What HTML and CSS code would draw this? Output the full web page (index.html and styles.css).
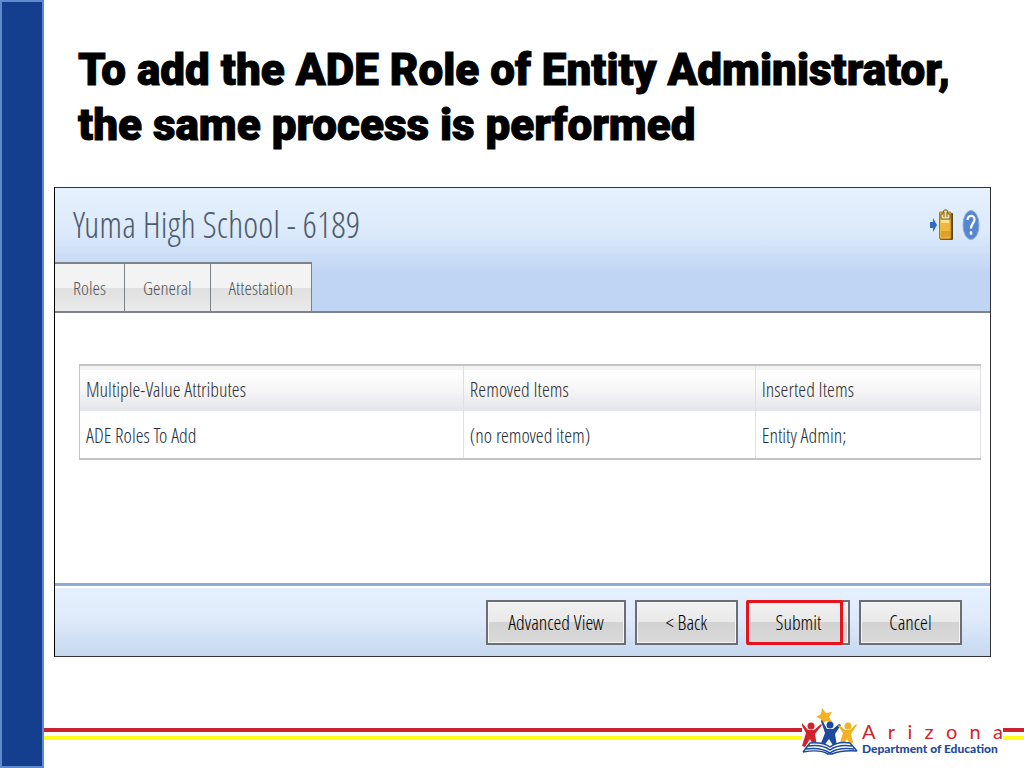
FILE: index.html
```html
<!DOCTYPE html>
<html lang="en">
<head>
    <meta charset="UTF-8">
    <meta name="viewport" content="width=device-width, initial-scale=1.0">
    <title>Entity Administrator Role</title>
    <link rel="stylesheet" href="styles.css">
</head>
<body>
    <div class="sidebar"></div>
    <main class="slide">
        <h1 class="title">To add the ADE Role of Entity Administrator, the same process is performed</h1>

        <section class="panel">
            <header class="panel-header">
                <div class="panel-top">
                    <h2>Yuma High School - 6189</h2>
                    <div class="tools">
                        <button type="button" class="icon-btn" aria-label="Add to clipboard">
                            <svg width="24" height="34" viewBox="0 0 24 34">
                                <path d="M0 14h3v-4l4 7-4 7v-4H0z" fill="#2f6cc4"/>
                                <rect x="10" y="5" width="13" height="27" rx="1" fill="#5d451b"/>
                                <rect x="9.500" y="4" width="11.500" height="27" rx="1" fill="#f0b83b" stroke="#a87420"/>
                                <path d="M11 12h8v3h-8z" fill="#ffe28a"/>
                                <path d="M11 23h9v6h-9z" fill="#dda02b"/>
                                <path d="M11 11V6h2l1-4h3l1 4h2v5z" fill="#eee0a0" stroke="#80642a"/>
                                <path d="M14 4v5M17 4v5" stroke="#80642a"/>
                            </svg>
                        </button>
                        <button type="button" class="icon-btn" aria-label="Help">
                            <svg width="18" height="34" viewBox="0 0 18 34">
                                <ellipse cx="9" cy="17" rx="8" ry="14.500" fill="#5686cc" stroke="#86a9df"/>
                                <path d="M5.500 12c.5-5.500 7-5.500 7-.5 0 4-3.500 4-3.500 9" fill="none" stroke="#fff" stroke-width="2.200"/>
                                <ellipse cx="9" cy="25" rx="1.400" ry="2" fill="#fff"/>
                            </svg>
                        </button>
                    </div>
                </div>
                <nav class="tabs">
                    <a href="#roles">Roles</a>
                    <a href="#general">General</a>
                    <a href="#attestation">Attestation</a>
                </nav>
            </header>

            <div class="panel-body">
                <table>
                    <thead>
                        <tr>
                            <th class="col-name">Multiple-Value Attributes</th>
                            <th class="col-removed">Removed Items</th>
                            <th class="col-inserted">Inserted Items</th>
                        </tr>
                    </thead>
                    <tbody>
                        <tr>
                            <td>ADE Roles To Add</td>
                            <td>(no removed item)</td>
                            <td>Entity Admin;</td>
                        </tr>
                    </tbody>
                </table>
            </div>

            <footer class="actions">
                <button type="button" class="btn btn-wide">Advanced View</button>
                <button type="button" class="btn">&lt; Back</button>
                <button type="button" class="btn marked">Submit</button>
                <button type="button" class="btn">Cancel</button>
            </footer>
        </section>

        <footer class="brand">
            <div class="stripes"></div>
            <div class="logo">
                <svg width="56" height="48" viewBox="0 0 56 48">
                    <path d="M20 0l4 5 6-1-3 5 3 5-6-1-4 4-1-6-5-2 5-3z" fill="#f4b223"/>
                    <!-- left -->
                    <circle cx="9" cy="18" r="3.500" fill="#d2232a"/>
                    <path d="M0 15l6 7h6l7-6 1 1-7 9 2 12-3 1-4-8-5 8-3-1 4-13-5-9z" fill="#d2232a"/>
                    <!-- middle -->
                    <circle cx="28" cy="17" r="3.500" fill="#1d4a9c"/>
                    <path d="M20 12l5 9h6l6-5 2 1-6 9 2 12-3 1-5-8-6 8-3-1 5-13-4-12z" fill="#1d4a9c"/>
                    <!-- right -->
                    <circle cx="46" cy="18" r="3.500" fill="#f4b223"/>
                    <path d="M37 17l6 5h5l6-6 1 1-6 9 3 12-3 1-4-8-5 8-3-1 4-13-5-7z" fill="#f4b223"/>
                    <!-- book -->
                    <path d="M7 35L0 45q17-3 26 2h4q10-5 26-3l-5-9q-14-2-23 4-8-6-21-4z" fill="#fff"/>
                    <path d="M8 35q13-1 20 4 8-6 20-4M6 38q14-2 22 4 8-6 22-4M4 41q15-2 24 4 8-6 24-4M1 44q17-3 25 2h4q10-4 25-3M8 35L1 44M48 35l7 8" fill="none" stroke="#1d4a9c" stroke-width="1.500"/>
                </svg>
                <div class="logo-text">
                    <span class="logo-state"><i>A</i><i>r</i><i>i</i><i>z</i><i>o</i><i>n</i><i>a</i></span>
                    <span class="logo-dept">Department of Education</span>
                </div>
            </div>
            <div class="stripes stripes-end"></div>
        </footer>
    </main>
</body>
</html>
```
FILE: styles.css
```css
* {
    box-sizing: border-box;
}

body {
    margin: 0;
    min-height: 100vh;
    display: flex;
    background: white;
    font-family: "Open Sans Condensed Light", "Roboto Condensed", "Liberation Sans Narrow", sans-serif;
    font-weight: 300;
}

.sidebar {
    width: 44px;
    flex-shrink: 0;
    background: #143f8f;
    border: 2px solid #5f8bcd;
}

.slide {
    flex: 1;
    min-width: 0;
    display: flex;
    flex-direction: column;
}

.title {
    margin: 0;
    padding: 43px 24px 0 34px;
    font-family: "Franklin Gothic Heavy", Roboto, sans-serif;
    font-size: 44px;
    font-weight: 900;
    line-height: 55px;
    color: black;
    -webkit-text-stroke: 1px black;
}

.panel {
    margin: 34px 33px 0 10px;
    border: 1px solid #333;
    border-left-color: black;
}

.panel-header {
    background: linear-gradient(#e5f1fd, #dceafb 35%, #c0d5f3 70%, #c0d5f3);
    border-bottom: 2px solid #7d8188;
}

.panel-top {
    display: flex;
    justify-content: space-between;
    align-items: center;
    height: 74px;
    padding: 0 10px 0 18px;
}

.panel-top h2 {
    margin: 0;
    font-size: 36px;
    line-height: 70px;
    font-weight: 300;
    color: #4f5c6d;
}

.tools {
    display: flex;
    gap: 8px;
}

.icon-btn {
    padding: 0;
    border: none;
    background: none;
    cursor: pointer;
}

.icon-btn svg {
    display: block;
}

.tabs {
    display: flex;
}

.tabs a {
    padding: 1px 18px 0;
    border: 1px solid #7d8188;
    border-top-width: 2px;
    border-left: none;
    border-bottom: none;
    background: linear-gradient(#f3f3f3 52%, #e0e0e0 52%, #ebebeb);
    color: #555;
    font-size: 19px;
    line-height: 46px;
    text-decoration: none;
}

.panel-body {
    padding: 51px 9px 123px 24px;
}

table {
    width: 100%;
    table-layout: fixed;
    border-collapse: collapse;
    border: 1px solid #c4c4c4;
    border-width: 2px 1px;
    font-size: 20px;
    color: #232d40;
}

th, td {
    height: 46px;
    padding: 2px 6px 0;
    border-right: 1px solid #dedfe2;
    font-weight: 300;
    text-align: left;
}

td {
    height: 48px;
}

th {
    background: linear-gradient(#f3f3f4 8%, white 8%, #f7f7f8 50%, #e4e5e8);
    color: #303030;
}

.col-name {
    width: 42.6%;
}

.col-removed {
    width: 32.4%;
}

.col-inserted {
    width: 25%;
}

.actions {
    display: flex;
    justify-content: flex-end;
    gap: 9px;
    padding: 14px 28px 11px;
    border-top: 3px solid #8eabd3;
    background: linear-gradient(white 2px, #e5f1fe 2px, #dfebfb 45%, #c6d8ef);
}

.btn {
    position: relative;
    width: 103px;
    height: 45px;
    padding: 0;
    border: 2px solid #6b6f74;
    background: linear-gradient(#f1f1f1, #e9e9e9 48%, #d2d2d2 48%, #d9d9d9);
    box-shadow: inset 0 0 0 1px #f4f4f4;
    font-family: inherit;
    font-weight: 300;
    font-size: 20px;
    color: black;
    cursor: pointer;
}

.btn-wide {
    width: 140px;
}

/* red frame round the button to press */
.marked::after {
    content: "";
    position: absolute;
    inset: -2px 5px -2px -3px;
    border: 3px solid #e8121b;
    border-radius: 2px;
}

.brand {
    display: flex;
    align-items: flex-end;
    margin-top: auto;
    padding-bottom: 12px;
}

.stripes {
    flex: 1;
    height: 12px;
    margin-bottom: 16px;
    border-top: 4px solid #c8232c;
    border-bottom: 4px solid #ffff1a;
}

.stripes-end {
    flex: 0 0 21px;
}

.logo {
    display: flex;
    align-items: flex-end;
    gap: 4px;
    width: 201px;
}

.logo-text {
    flex: 1;
    display: flex;
    flex-direction: column;
    white-space: nowrap;
}

.logo-state {
    display: flex;
    justify-content: space-between;
    font-family: Lato, sans-serif;
    font-size: 20px;
    font-weight: 400;
    line-height: 22px;
    color: #d2232a;
}

.logo-state i {
    font-style: normal;
}

.logo-dept {
    font-family: Lato, sans-serif;
    font-size: 12px;
    font-weight: 900;
    line-height: 14px;
    color: #1d4a9c;
}
```
